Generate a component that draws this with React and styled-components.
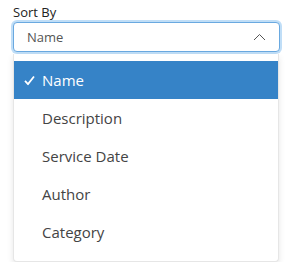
import React, { useState } from 'react'
import styled, { createGlobalStyle } from 'styled-components'

const options = ['Name', 'Description', 'Service Date', 'Author', 'Category']

const Global = createGlobalStyle`
  body {
    margin: 0;
    background: #fff;
    font-family: "Open Sans", "Noto Sans", "Liberation Sans", sans-serif;
  }
`

const Wrap = styled.div`
  padding: 3px 10px 0 13px;
  width: 267px;
`

const Label = styled.div`
  font-size: 13px;
  line-height: 18px;
  color: #222;
  margin-bottom: 1px;
`

const Select = styled.div`
  height: 30px;
  box-sizing: border-box;
  border: 1px solid #6aa9e0;
  border-radius: 4px;
  box-shadow: 0 0 0 2px rgba(140, 195, 240, 0.55);
  display: flex;
  align-items: center;
  justify-content: space-between;
  padding: 0 13px 0 13px;
  font-size: 13px;
  color: #555;
  background: #fff;
`

const Menu = styled.ul`
  list-style: none;
  margin: 2px 1px 0 0;
  padding: 7px 0 10px;
  border: 1px solid #e6e6e6;
  border-top: none;
  border-radius: 0 0 4px 4px;
  box-shadow: 0 3px 6px rgba(0, 0, 0, 0.1);
  background: #fff;
`

const Item = styled.li`
  height: 38px;
  display: flex;
  align-items: center;
  position: relative;
  padding-left: 28px;
  font-size: 15px;
  color: ${p => (p.$active ? '#fff' : '#444')};
  background: ${p => (p.$active ? '#3683c7' : 'transparent')};
`

const Check = styled.span`
  position: absolute;
  left: 10px;
  top: 50%;
  transform: translateY(-45%);
  display: flex;
`

const Chevron = () => (
  <svg width="13" height="8" viewBox="0 0 13 8" fill="none">
    <path d="M1 7L6.5 1.5L12 7" stroke="#555" strokeWidth="1" />
  </svg>
)

const Tick = () => (
  <svg width="11" height="10" viewBox="0 0 11 10" fill="none">
    <path d="M1 5.4L4 8.6L10 1" stroke="#fff" strokeWidth="1.8" />
  </svg>
)

export default function App() {
  const [value, setValue] = useState('Name')
  return (
    <Wrap>
      <Global />
      <Label>Sort By</Label>
      <Select>
        <span>{value}</span>
        <Chevron />
      </Select>
      <Menu>
        {options.map(o => (
          <Item key={o} $active={o === value} onClick={() => setValue(o)}>
            {o === value && (
              <Check>
                <Tick />
              </Check>
            )}
            {o}
          </Item>
        ))}
      </Menu>
    </Wrap>
  )
}
